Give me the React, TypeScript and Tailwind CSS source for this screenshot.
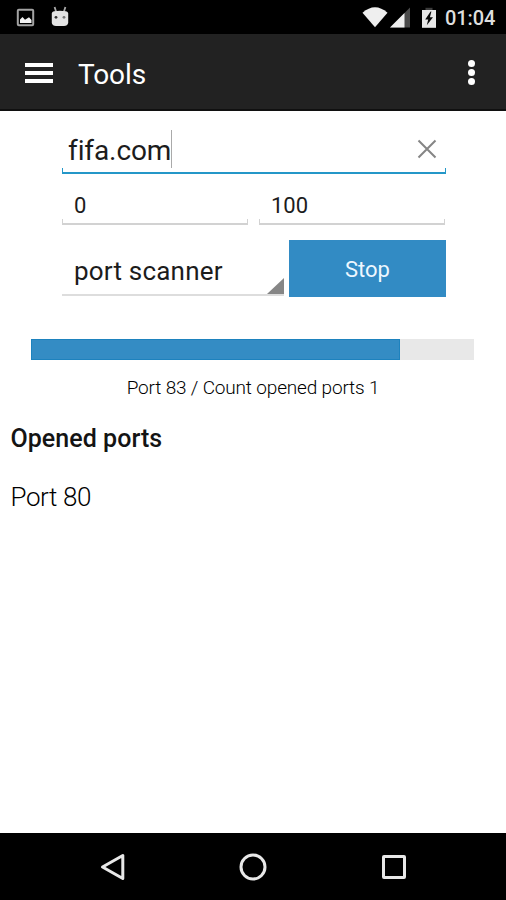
const FONT = "font-['Roboto','Noto_Sans',sans-serif]";

function StatusBar() {
  return (
    <div className="flex h-[34px] items-center bg-black text-[#dedede]">
      <svg className="ml-4 h-[19px] w-[19px] shrink-0" viewBox="0 0 19 19">
        <rect x="1.8" y="1.8" width="15.4" height="15.4" rx="1" fill="none" stroke="#a3a3a3" strokeWidth="2" />
        <path d="M4 15V11.5L6.5 9L9 11.8L13 9.3L15.5 12V15Z" fill="#f2f2f2" />
      </svg>
      <svg className="ml-4 h-[22px] w-[18px] shrink-0" viewBox="0 0 18 22">
        <path d="M3.6 1L5.2 6M14.4 1L12.8 6" stroke="#a8a8a8" strokeWidth="1.8" />
        <path d="M0.8 7.5Q0.8 5.5 3 5.2Q9 4.4 15 5.2Q17.2 5.5 17.2 7.5V17Q16.5 20 13 20H5Q1.5 20 0.8 17Z" fill="#e4e4e4" />
        <circle cx="5" cy="11.3" r="1.4" fill="#333" />
        <circle cx="13" cy="11.3" r="1.4" fill="#777" />
      </svg>
      <svg className="ml-auto h-[22px] w-[26px] shrink-0" viewBox="0 0 26 22">
        <path d="M0.5 6.8Q13 -4.2 25.5 6.8L13 21.3Z" fill="#efefef" />
      </svg>
      <svg className="ml-[2px] h-[22px] w-[20px] shrink-0" viewBox="0 0 20 22">
        <path d="M0 21.5L20 1.5V21.5Z" fill="#4b4b4b" />
        <path d="M0 21.5L14.5 7V21.5Z" fill="#efefef" />
      </svg>
      <svg className="ml-[12px] h-[22px] w-[14px] shrink-0" viewBox="0 0 14 22">
        <path d="M0 4H14V21.8H0Z" fill="#e8e8e8" />
        <path d="M3.5 1.8H10.5V4H3.5Z" fill="#3c3c3c" />
        <path d="M8.6 5.5L3.2 13.4H6.2L4.8 19.2L11 11.2H7.9L9.4 5.5Z" fill="#0a0a0a" />
      </svg>
      <span className="mr-[10px] ml-[9px] h-[34px] w-[51px] text-[20px] leading-[36px] font-medium tracking-[-0.1px] whitespace-nowrap">
        01:04
      </span>
    </div>
  );
}

function AppBar() {
  return (
    <header className="flex h-[77px] items-center border-b-2 border-[#101010] bg-[#222222] pt-[2px] text-white">
      <button className="ml-[25px] flex h-[20px] w-[28px] flex-col justify-between" aria-label="Menu">
        <span className="h-1 w-full bg-white" />
        <span className="h-1 w-full bg-white" />
        <span className="h-1 w-full bg-white" />
      </button>
      <h1 className="ml-[25px] pt-[4px] text-[28px] leading-[36px] tracking-[-0.1px]">Tools</h1>
      <button className="mr-[31px] ml-auto flex w-[7px] flex-col gap-[2px]" aria-label="More">
        <span className="h-[7px] w-[7px] rounded-full bg-white" />
        <span className="h-[7px] w-[7px] rounded-full bg-white" />
        <span className="h-[7px] w-[7px] rounded-full bg-white" />
      </button>
    </header>
  );
}

function PortField({ value }: { value: string }) {
  return (
    <div className="flex h-[50px] flex-1 flex-col">
      <span className="h-[44px] pl-[12px] text-[22px] leading-[61px] text-[#1c1c1c]">{value}</span>
      <div className="mt-auto h-[6px] border-x border-b-2 border-[#d2d2d2]" />
    </div>
  );
}

export default function App() {
  const progress = 83.2;
  return (
    <div className={`flex h-[900px] w-[506px] flex-col overflow-hidden bg-white text-[#1c1c1c] ${FONT}`}>
      <StatusBar />
      <AppBar />
      <main className="flex-1">
        <form className="ml-[62px] w-[384px] pt-[13px]">
          <div className="flex h-[50px] flex-col">
            <div className="flex h-[44px] items-start pl-[6px]">
              <span className="text-[28px] leading-[53px] tracking-[-0.1px]">fifa.com</span>
              <span className="mt-[6px] h-[38px] w-px bg-[#aaaaaa]" />
              <svg className="mt-[15px] mr-[9px] ml-auto h-5 w-5" viewBox="0 0 20 20">
                <path d="M1.5 1.5L18.5 18.5M18.5 1.5L1.5 18.5" stroke="#858585" strokeWidth="2" />
              </svg>
            </div>
            <div className="h-[6px] border-x border-b-2 border-[#2497c8]" />
          </div>
          <div className="mt-px flex w-[383px] gap-[11px]">
            <PortField value="0" />
            <PortField value="100" />
          </div>
          <div className="mt-[15px] flex h-[57px]">
            <div className="flex h-[56px] w-[222px] items-start border-b-2 border-[#dddddd] pl-[12px]">
              <span className="text-[26px] leading-[62px] tracking-[0.2px]">port scanner</span>
              <svg className="mt-[38px] ml-auto h-4 w-[17px]" viewBox="0 0 17 16">
                <path d="M17 0V16H0Z" fill="#868686" />
              </svg>
            </div>
            <button type="button" className="ml-[5px] w-[157px] bg-[#328bc4] text-[22px] leading-[59px] text-[#edf7ff]">
              Stop
            </button>
          </div>
        </form>
        <div className="ml-[31px] mt-[42px] h-[21px] w-[443px] bg-[#e8e8e8]">
          <div className="h-full border border-[#1d82be] bg-[#348cc4]" style={{ width: `${progress}%` }} />
        </div>
        <p className="mt-[16px] text-center text-[19px] leading-[24px] font-light tracking-[-0.17px] text-black">
          Port 83 / Count opened ports 1
        </p>
        <section className="mt-[23px] pl-[10.5px]">
          <h2 className="text-[25px] leading-[32px] font-medium tracking-[0.05px] text-[#141414]">Opened ports</h2>
          <p className="mt-[26px] text-[26px] leading-[32px] font-light tracking-[-0.4px] text-black">Port 80</p>
        </section>
      </main>
      <nav className="flex h-[67px] items-center justify-between bg-black pr-[99px] pl-[100px]">
        <svg className="h-[28px] w-[25px]" viewBox="0 0 25 28">
          <path d="M2.5 14L22.8 2.5V25.5Z" fill="none" stroke="#e8e8e8" strokeWidth="3" strokeLinejoin="round" />
        </svg>
        <svg className="h-[28px] w-[28px]" viewBox="0 0 28 28">
          <circle cx="14" cy="14" r="12" fill="none" stroke="#e8e8e8" strokeWidth="3" />
        </svg>
        <svg className="h-[26px] w-[26px]" viewBox="0 0 26 26">
          <rect x="2.5" y="2.5" width="21" height="21" rx="0.5" fill="none" stroke="#e8e8e8" strokeWidth="3" />
        </svg>
      </nav>
    </div>
  );
}
